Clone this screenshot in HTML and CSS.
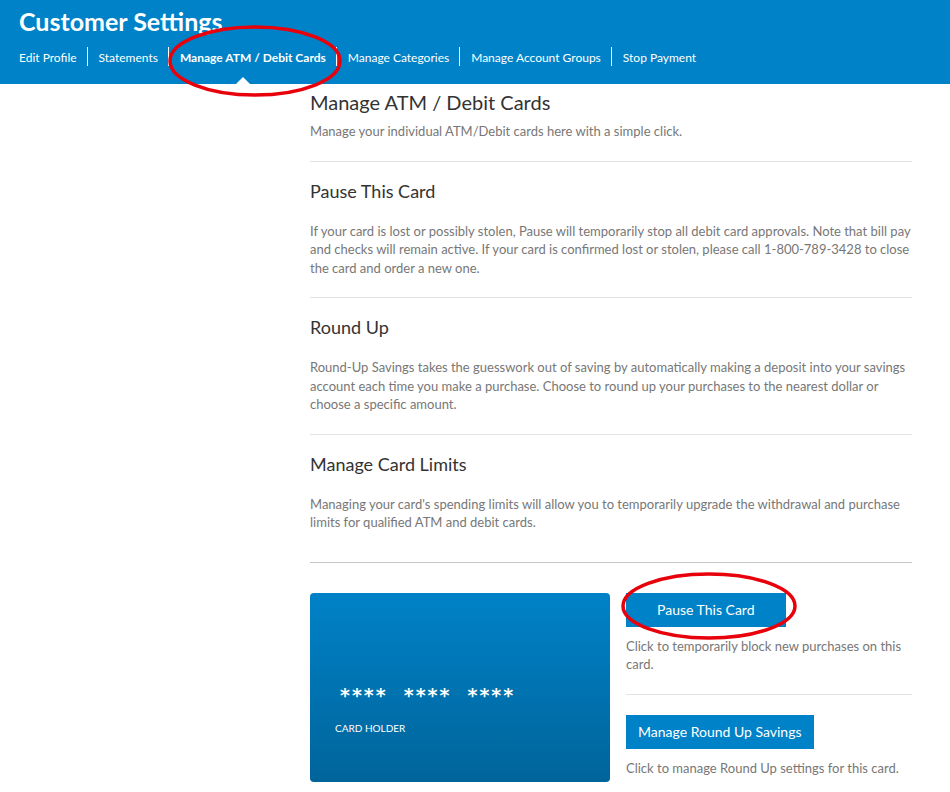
FILE: index.html
```html
<!DOCTYPE html>
<html lang="en">
<head>
    <meta charset="UTF-8">
    <meta name="viewport" content="width=device-width, initial-scale=1.0">
    <title>Customer Settings</title>
    <link rel="stylesheet" href="styles.css">
</head>
<body>
    <!-- Cabecera -->
    <div class="cabecera">
        <h1 class="titulo">Customer Settings</h1>
        <ul class="menu">
            <li><a href="#">Edit Profile</a></li>
            <li><a href="#">Statements</a></li>
            <li class="activo"><a href="#">Manage ATM / Debit Cards</a></li>
            <li><a href="#">Manage Categories</a></li>
            <li><a href="#">Manage Account Groups</a></li>
            <li><a href="#">Stop Payment</a></li>
        </ul>
    </div>

    <!-- Contenido -->
    <div class="contenido">
        <div class="bloque primero">
            <h2 class="titulo-seccion">Manage ATM / Debit Cards</h2>
            <p class="texto">Manage your individual ATM/Debit cards here with a simple click.</p>
        </div>
        <div class="bloque">
            <h3 class="subtitulo">Pause This Card</h3>
            <p class="texto">If your card is lost or possibly stolen, Pause will temporarily stop all debit card approvals. Note that bill pay and checks will remain active. If your card is confirmed lost or stolen, please call 1-800-789-3428 to close the card and order a new one.</p>
        </div>
        <div class="bloque">
            <h3 class="subtitulo">Round Up</h3>
            <p class="texto">Round-Up Savings takes the guesswork out of saving by automatically making a deposit into your savings account each time you make a purchase. Choose to round up your purchases to the nearest dollar or choose a specific amount.</p>
        </div>
        <div class="bloque ultimo">
            <h3 class="subtitulo">Manage Card Limits</h3>
            <p class="texto">Managing your card's spending limits will allow you to temporarily upgrade the withdrawal and purchase limits for qualified ATM and debit cards.</p>
        </div>

        <div class="tarjetas">
            <div class="tarjeta">
                <div class="numero"><span>****</span><span>****</span><span>****</span></div>
                <div class="titular">CARD HOLDER</div>
            </div>
            <div class="acciones">
                <div class="accion">
                    <button class="boton">Pause This Card</button>
                    <p class="texto">Click to temporarily block new purchases on this card.</p>
                </div>
                <div class="accion">
                    <button class="boton">Manage Round Up Savings</button>
                    <p class="texto">Click to manage Round Up settings for this card.</p>
                </div>
            </div>
        </div>
    </div>

    <!-- Marcas rojas -->
    <svg class="marcas" width="950" height="792" viewBox="0 0 950 792">
        <ellipse cx="255" cy="61" rx="85" ry="34" fill="none" stroke="#e8000b" stroke-width="3.5"/>
        <ellipse cx="709" cy="606" rx="86" ry="32" fill="none" stroke="#e8000b" stroke-width="3.5"/>
    </svg>
</body>
</html>
```

FILE: styles.css
```css
body {
    font-family: Lato, 'Open Sans', sans-serif;
    margin: 0;
    background: white;
    color: #333;
}

/* Cabecera */
.cabecera {
    background: #0082c8;
    height: 84px;
    padding: 0 19px;
    box-sizing: border-box;
}

.titulo {
    color: white;
    font-size: 25px;
    font-weight: bold;
    margin: 0;
    padding-top: 6px;
    line-height: 30px;
}

.menu {
    list-style: none;
    margin: 11px 0 0 0;
    padding: 0;
    display: flex;
}

.menu li {
    position: relative;
    border-left: 1px solid white;
    padding: 0 10px 0 11px;
    line-height: 17px;
}

.menu li:first-child {
    border-left: none;
    padding-left: 0;
}

.menu a {
    color: white;
    text-decoration: none;
    font-size: 12px;
}

.menu li.activo a {
    font-weight: bold;
}

.menu li.activo::after {
    content: '';
    position: absolute;
    left: 50%;
    bottom: -18px;
    margin-left: -16px;
    border: 7px solid transparent;
    border-bottom-color: white;
    border-top: none;
}

/* Contenido */
.contenido {
    margin-left: 310px;
    width: 602px;
}

.bloque {
    border-bottom: 1px solid #e3e3e3;
    padding: 17px 0 20px 0;
}

.bloque.primero {
    padding: 6px 0 20px 0;
}

.bloque.ultimo {
    border-bottom-color: #c8c8c8;
    padding-bottom: 30px;
}

.titulo-seccion {
    font-size: 20px;
    font-weight: normal;
    margin: 0;
    line-height: 24px;
}

.subtitulo {
    font-size: 18px;
    font-weight: normal;
    margin: 0 0 19px 0;
    line-height: 24px;
}

.texto {
    font-size: 13px;
    color: #777;
    line-height: 18.5px;
    margin: 0;
}

.primero .texto {
    margin-top: 8px;
}

/* Tarjeta */
.tarjetas {
    display: flex;
    gap: 16px;
    margin-top: 30px;
}

.tarjeta {
    width: 300px;
    height: 189px;
    flex-shrink: 0;
    border-radius: 4px;
    background: linear-gradient(#0082c8, #00649a);
    box-sizing: border-box;
    padding: 88px 0 0 25px;
    color: white;
}

.numero {
    font-family: 'DejaVu Sans', sans-serif;
    font-size: 19px;
    font-weight: bold;
    letter-spacing: 2px;
    padding-left: 5px;
    line-height: 22px;
    position: relative;
    top: 3px;
}

.numero span {
    margin-right: 16px;
}

.titular {
    font-size: 10px;
    margin-top: 19px;
}

.acciones {
    flex: 1;
}

.accion {
    padding-bottom: 20px;
}

.accion + .accion {
    border-top: 1px solid #e3e3e3;
    padding-top: 20px;
}

.boton {
    display: block;
    background: #0082c8;
    color: white;
    border: none;
    font-family: inherit;
    font-size: 14px;
    padding: 0 31px;
    height: 34px;
    margin-bottom: 10px;
    cursor: pointer;
}

.accion + .accion .boton {
    padding: 0 12px;
}

.marcas {
    position: absolute;
    top: 0;
    left: 0;
    pointer-events: none;
}
```
